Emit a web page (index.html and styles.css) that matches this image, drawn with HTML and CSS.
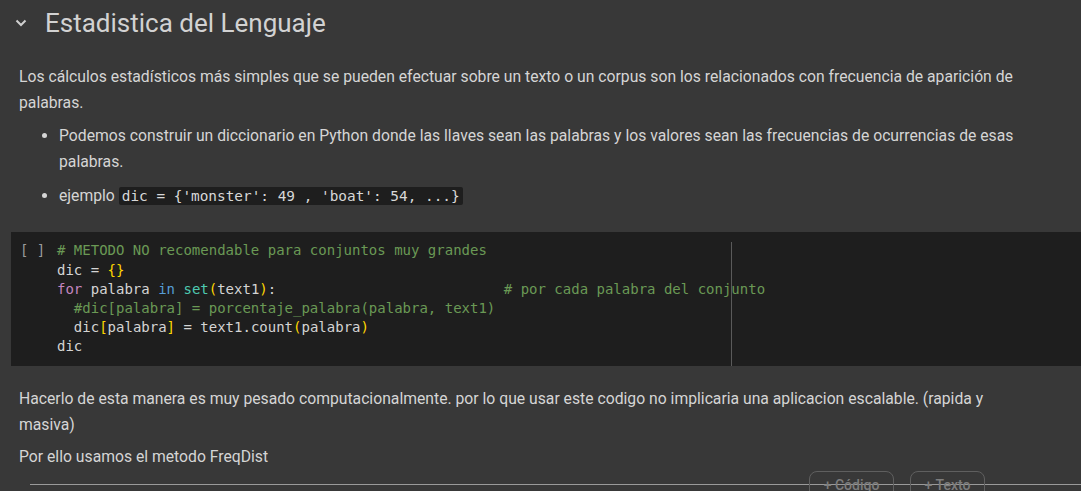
FILE: index.html
```html
<!DOCTYPE html>
<html lang="es">
<head>
<meta charset="utf-8">
<title>Estadistica del Lenguaje</title>
<link rel="stylesheet" href="styles.css">
</head>
<body>
<div class="notebook">
  <div class="section-head">
    <svg class="chevron" width="12" height="8" viewBox="0 0 12 8"><path d="M1.5 1.5 L6 6 L10.5 1.5" fill="none" stroke="#cfcfcf" stroke-width="2"/></svg>
    <h1 class="section-title">Estadistica del Lenguaje</h1>
  </div>

  <div class="md-cell">
    <p class="md-p">Los cálculos estadísticos más simples que se pueden efectuar sobre un texto o un corpus son los relacionados con frecuencia de aparición de palabras.</p>
    <ul class="md-list">
      <li>Podemos construir un diccionario en Python donde las llaves sean las palabras y los valores sean las frecuencias de ocurrencias de esas palabras.</li>
      <li class="li-example">ejemplo <code class="inline-code">dic = {'monster': 49 , 'boat': 54, ...}</code></li>
    </ul>
  </div>

  <div class="code-cell">
    <div class="run-ind">[ ]</div>
    <div class="editor">
      <div class="ruler"></div>
<pre class="code"><span class="c"># METODO NO recomendable para conjuntos muy grandes</span>
dic = <span class="b">{}</span>
<span class="kw">for</span> palabra <span class="in">in</span> <span class="fn">set</span><span class="b">(</span>text1<span class="b">)</span>:                           <span class="c"># por cada palabra del conjunto</span>
  <span class="c">#dic[palabra] = porcentaje_palabra(palabra, text1)</span>
  dic<span class="b">[</span>palabra<span class="b">]</span> = text1.count<span class="b">(</span>palabra<span class="b">)</span>
dic</pre>
    </div>
  </div>

  <div class="md-cell md-cell-2">
    <p class="md-p">Hacerlo de esta manera es muy pesado computacionalmente. por lo que usar este codigo no implicaria una aplicacion escalable. (rapida y masiva)</p>
    <p class="md-p md-p-last">Por ello usamos el metodo FreqDist</p>
  </div>

  <div class="add-row">
    <div class="add-line"></div>
    <div class="add-buttons">
      <button class="add-btn add-code">+ Código</button>
      <button class="add-btn add-text">+ Texto</button>
    </div>
  </div>
</div>
</body>
</html>
```

FILE: styles.css
```css
html, body {
  margin: 0;
  padding: 0;
  background: #383838;
  overflow: hidden;
}

.notebook {
  font-family: Roboto, "Noto Sans", sans-serif;
  color: #d5d5d5;
  width: 1081px;
  height: 491px;
  overflow: hidden;
}

.section-head {
  display: flex;
  align-items: center;
  padding: 7px 0 0 15px;
  height: 32px;
}

.chevron {
  display: block;
  width: 12px;
  height: 8px;
  margin-right: 18px;
}

.section-title {
  margin: 0;
  font-size: 26px;
  font-weight: 400;
  line-height: 32px;
  color: #d2d2d2;
}

.md-cell {
  padding: 25px 0 0 19px;
  font-size: 15.72px;
  line-height: 25.6px;
}

.md-p {
  margin: 0;
  padding-right: 40px;
}

.md-list {
  margin: 8px 0 0;
  padding-left: 40px;
  padding-right: 40px;
}

.li-example {
  margin-top: 9px;
}

.inline-code {
  font-family: "DejaVu Sans Mono", monospace;
  font-size: 14.4px;
  line-height: 16px;
  background: #1e1e1e;
  color: #d8d8d8;
  padding: 1px 3px;
  border-radius: 2px;
}

.code-cell {
  display: flex;
  margin: 23px 0 0 11px;
  background: #1e1e1e;
  height: 134px;
}

.run-ind {
  font-family: "DejaVu Sans Mono", monospace;
  font-size: 14px;
  line-height: 19.2px;
  color: #9a9a9a;
  padding: 9.5px 0 0 9px;
  width: 37px;
  white-space: pre;
}

.editor {
  position: relative;
  flex: 1;
}

.ruler {
  position: absolute;
  left: 674px;
  top: 10px;
  bottom: 0;
  width: 1px;
  background: #5a5a5a;
}

.code {
  margin: 0;
  padding-top: 9.5px;
  font-family: "DejaVu Sans Mono", monospace;
  font-size: 14px;
  line-height: 19.2px;
  color: #d4d4d4;
}

.c { color: #6a9955; }
.b { color: #ffd700; }
.kw { color: #c586c0; }
.in { color: #569cd6; }
.fn { color: #4ec9b0; }

.md-cell-2 {
  padding-top: 20px;
}

.md-p-last {
  margin-top: 7px;
}

.add-row {
  position: relative;
  margin-top: 1px;
  height: 30px;
}

.add-line {
  position: absolute;
  left: 30px;
  right: 0;
  top: 13px;
  height: 1px;
  background: #9a9a9a;
}

.add-buttons {
  position: absolute;
  left: 809px;
  top: 0;
  display: flex;
  gap: 16px;
}

.add-btn {
  font-family: Roboto, sans-serif;
  font-size: 14px;
  font-weight: 500;
  color: #7d7d7d;
  background: transparent;
  border: 1px solid #5f5f5f;
  border-radius: 8px;
  height: 28px;
  padding: 0 10px;
  line-height: 26px;
}

.add-code { width: 85px; }
.add-text { width: 75px; }
```
